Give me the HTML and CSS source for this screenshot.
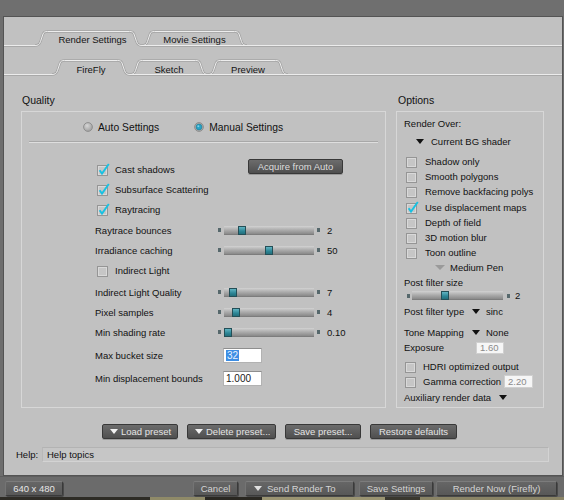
FILE: index.html
```html
<!DOCTYPE html>
<html>
<head>
<meta charset="utf-8">
<title>Render Settings</title>
<link rel="stylesheet" href="styles.css">
</head>
<body>
<div class="topband"></div>
<div class="panel">
  <div class="tabrow row1">
    <div class="tabfill lead1"></div>
    <div class="tab sel t107 first">
      <svg width="107" height="17" viewBox="0 0 107 17"><path class="tshadow" d="M0,15.5 C3,15.5 4.5,14.5 5.5,11.5 L8,4 C8.8,2 10,1.5 12.5,1.5 L94.5,1.5 C97,1.5 98.2,2 99,4 L101.5,11.5 C102.5,14.5 104,15.5 107,15.5"/><path class="tline" d="M0,15.5 C3,15.5 4.5,14.5 5.5,11.5 L8,4 C8.8,2 10,1.5 12.5,1.5 L94.5,1.5 C97,1.5 98.2,2 99,4 L101.5,11.5 C102.5,14.5 104,15.5 107,15.5"/></svg>
      <span>Render Settings</span>
    </div>
    <div class="tab t105">
      <svg width="105" height="17" viewBox="0 0 105 17"><path class="tshadow" d="M0,15.5 C3,15.5 4.5,14.5 5.5,11.5 L8,4 C8.8,2 10,1.5 12.5,1.5 L92.5,1.5 C95,1.5 96.2,2 97,4 L99.5,11.5 C100.5,14.5 102,15.5 105,15.5"/><path class="tline" d="M0,15.5 C3,15.5 4.5,14.5 5.5,11.5 L8,4 C8.8,2 10,1.5 12.5,1.5 L92.5,1.5 C95,1.5 96.2,2 97,4 L99.5,11.5 C100.5,14.5 102,15.5 105,15.5"/><path class="tline" d="M0,15.5H105"/><path class="tdark" d="M0,16.5H105"/></svg>
      <span>Movie Settings</span>
    </div>
    <div class="tabfill grow"></div>
  </div>

  <div class="tabrow row2">
    <div class="tabfill lead2"></div>
    <div class="tab sel t78">
      <svg width="78" height="17" viewBox="0 0 78 17"><path class="tshadow" d="M0,15.5 C3,15.5 4.5,14.5 5.5,11.5 L8,4 C8.8,2 10,1.5 12.5,1.5 L65.5,1.5 C68,1.5 69.2,2 70,4 L72.5,11.5 C73.5,14.5 75,15.5 78,15.5"/><path class="tline" d="M0,15.5 C3,15.5 4.5,14.5 5.5,11.5 L8,4 C8.8,2 10,1.5 12.5,1.5 L65.5,1.5 C68,1.5 69.2,2 70,4 L72.5,11.5 C73.5,14.5 75,15.5 78,15.5"/></svg>
      <span>FireFly</span>
    </div>
    <div class="tab t78">
      <svg width="78" height="17" viewBox="0 0 78 17"><path class="tshadow" d="M0,15.5 C3,15.5 4.5,14.5 5.5,11.5 L8,4 C8.8,2 10,1.5 12.5,1.5 L65.5,1.5 C68,1.5 69.2,2 70,4 L72.5,11.5 C73.5,14.5 75,15.5 78,15.5"/><path class="tline" d="M0,15.5 C3,15.5 4.5,14.5 5.5,11.5 L8,4 C8.8,2 10,1.5 12.5,1.5 L65.5,1.5 C68,1.5 69.2,2 70,4 L72.5,11.5 C73.5,14.5 75,15.5 78,15.5"/><path class="tline" d="M0,15.5H78"/><path class="tdark" d="M0,16.5H78"/></svg>
      <span>Sketch</span>
    </div>
    <div class="tab t80">
      <svg width="80" height="17" viewBox="0 0 80 17"><path class="tshadow" d="M0,15.5 C3,15.5 4.5,14.5 5.5,11.5 L8,4 C8.8,2 10,1.5 12.5,1.5 L67.5,1.5 C70,1.5 71.2,2 72,4 L74.5,11.5 C75.5,14.5 77,15.5 80,15.5"/><path class="tline" d="M0,15.5 C3,15.5 4.5,14.5 5.5,11.5 L8,4 C8.8,2 10,1.5 12.5,1.5 L67.5,1.5 C70,1.5 71.2,2 72,4 L74.5,11.5 C75.5,14.5 77,15.5 80,15.5"/><path class="tline" d="M0,15.5H80"/><path class="tdark" d="M0,16.5H80"/></svg>
      <span>Preview</span>
    </div>
    <div class="tabfill grow"></div>
  </div>

  <div class="sections">
    <section class="quality">
      <div class="sechead">Quality</div>
      <div class="box qbox">
        <div class="radiorow">
          <svg class="radio" width="10" height="10" viewBox="0 0 10 10"><defs><radialGradient id="rg" cx="40%" cy="35%" r="70%"><stop offset="0" stop-color="#d6d6d6"/><stop offset="1" stop-color="#9c9c9c"/></radialGradient></defs><circle cx="5" cy="5" r="4.4" fill="url(#rg)" stroke="#8a8a8a" stroke-width="0.9"/></svg>
          <span class="rlabel">Auto Settings</span>
          <svg class="radio r2" width="10" height="10" viewBox="0 0 10 10"><circle cx="5" cy="5" r="4.4" fill="#a9a9a9" stroke="#8a8a8a" stroke-width="0.9"/><circle cx="5" cy="5" r="2.9" fill="#27a3c6" stroke="#1c7c96" stroke-width="0.6"/><circle cx="4.3" cy="4.2" r="1" fill="#7fd3ea"/></svg>
          <span class="rlabel">Manual Settings</span>
        </div>
        <div class="sep"></div>
        <div class="checks">
          <div class="checkcol">
            <div class="crow"><svg class="cb" width="13" height="13" viewBox="0 0 13 13"><rect x="0.5" y="2.5" width="10" height="10" fill="#c6c6c6" stroke="#959595"/><rect x="1.5" y="3.5" width="8" height="8" fill="none" stroke="#d9d9d9"/><path d="M2.6 7.2 L5 10.6 L11.8 1" fill="none" stroke="#17c1e2" stroke-width="1.9"/></svg><span>Cast shadows</span></div>
            <div class="crow"><svg class="cb" width="13" height="13" viewBox="0 0 13 13"><rect x="0.5" y="2.5" width="10" height="10" fill="#c6c6c6" stroke="#959595"/><rect x="1.5" y="3.5" width="8" height="8" fill="none" stroke="#d9d9d9"/><path d="M2.6 7.2 L5 10.6 L11.8 1" fill="none" stroke="#17c1e2" stroke-width="1.9"/></svg><span>Subsurface Scattering</span></div>
            <div class="crow"><svg class="cb" width="13" height="13" viewBox="0 0 13 13"><rect x="0.5" y="2.5" width="10" height="10" fill="#c6c6c6" stroke="#959595"/><rect x="1.5" y="3.5" width="8" height="8" fill="none" stroke="#d9d9d9"/><path d="M2.6 7.2 L5 10.6 L11.8 1" fill="none" stroke="#17c1e2" stroke-width="1.9"/></svg><span>Raytracing</span></div>
          </div>
          <div class="btn acq">Acquire from Auto</div>
        </div>
        <div class="srow first-s">
          <span class="lbl">Raytrace bounces</span>
          <span class="sq"></span><span class="track"><span class="thumb" style="left:14px"></span></span><span class="sq sq2"></span><span class="val">2</span>
        </div>
        <div class="srow">
          <span class="lbl">Irradiance caching</span>
          <span class="sq"></span><span class="track"><span class="thumb" style="left:41px"></span></span><span class="sq sq2"></span><span class="val">50</span>
        </div>
        <div class="srow indirect">
          <svg class="cb" width="13" height="13" viewBox="0 0 13 13"><rect x="0.5" y="2.5" width="10" height="10" fill="#c6c6c6" stroke="#959595"/><rect x="1.5" y="3.5" width="8" height="8" fill="none" stroke="#d9d9d9"/></svg><span class="cbl">Indirect Light</span>
        </div>
        <div class="srow gap2">
          <span class="lbl">Indirect Light Quality</span>
          <span class="sq"></span><span class="track"><span class="thumb" style="left:5px"></span></span><span class="sq sq2"></span><span class="val">7</span>
        </div>
        <div class="srow">
          <span class="lbl">Pixel samples</span>
          <span class="sq"></span><span class="track"><span class="thumb" style="left:8px"></span></span><span class="sq sq2"></span><span class="val">4</span>
        </div>
        <div class="srow">
          <span class="lbl">Min shading rate</span>
          <span class="sq"></span><span class="track"><span class="thumb" style="left:0px"></span></span><span class="sq sq2"></span><span class="val">0.10</span>
        </div>
        <div class="irow ir1">
          <span class="ilbl">Max bucket size</span>
          <span class="inp"><span class="selected">32</span></span>
        </div>
        <div class="irow ir2">
          <span class="ilbl">Min displacement bounds</span>
          <span class="inp">1.000</span>
        </div>
      </div>
    </section>

    <section class="options">
      <div class="sechead">Options</div>
      <div class="box obox">
        <div class="orow renderover">Render Over:</div>
        <div class="orow bgrow"><span class="tri"></span><span>Current BG shader</span></div>
        <div class="ochecks">
          <div class="ocrow"><svg class="cb" width="13" height="13" viewBox="0 0 13 13"><rect x="0.5" y="2.5" width="10" height="10" fill="#c6c6c6" stroke="#959595"/><rect x="1.5" y="3.5" width="8" height="8" fill="none" stroke="#d9d9d9"/></svg><span>Shadow only</span></div>
          <div class="ocrow"><svg class="cb" width="13" height="13" viewBox="0 0 13 13"><rect x="0.5" y="2.5" width="10" height="10" fill="#c6c6c6" stroke="#959595"/><rect x="1.5" y="3.5" width="8" height="8" fill="none" stroke="#d9d9d9"/></svg><span>Smooth polygons</span></div>
          <div class="ocrow"><svg class="cb" width="13" height="13" viewBox="0 0 13 13"><rect x="0.5" y="2.5" width="10" height="10" fill="#c6c6c6" stroke="#959595"/><rect x="1.5" y="3.5" width="8" height="8" fill="none" stroke="#d9d9d9"/></svg><span>Remove backfacing polys</span></div>
          <div class="ocrow"><svg class="cb" width="13" height="13" viewBox="0 0 13 13"><rect x="0.5" y="2.5" width="10" height="10" fill="#c6c6c6" stroke="#959595"/><rect x="1.5" y="3.5" width="8" height="8" fill="none" stroke="#d9d9d9"/><path d="M2.6 7.2 L5 10.6 L11.8 1" fill="none" stroke="#17c1e2" stroke-width="1.9"/></svg><span>Use displacement maps</span></div>
          <div class="ocrow"><svg class="cb" width="13" height="13" viewBox="0 0 13 13"><rect x="0.5" y="2.5" width="10" height="10" fill="#c6c6c6" stroke="#959595"/><rect x="1.5" y="3.5" width="8" height="8" fill="none" stroke="#d9d9d9"/></svg><span>Depth of field</span></div>
          <div class="ocrow"><svg class="cb" width="13" height="13" viewBox="0 0 13 13"><rect x="0.5" y="2.5" width="10" height="10" fill="#c6c6c6" stroke="#959595"/><rect x="1.5" y="3.5" width="8" height="8" fill="none" stroke="#d9d9d9"/></svg><span>3D motion blur</span></div>
          <div class="ocrow"><svg class="cb" width="13" height="13" viewBox="0 0 13 13"><rect x="0.5" y="2.5" width="10" height="10" fill="#c6c6c6" stroke="#959595"/><rect x="1.5" y="3.5" width="8" height="8" fill="none" stroke="#d9d9d9"/></svg><span>Toon outline</span></div>
        </div>
        <div class="orow penrow"><span class="tri gray"></span><span>Medium Pen</span></div>
        <div class="orow pfsize">Post filter size</div>
        <div class="orow oslider"><span class="sq"></span><span class="track otrack"><span class="thumb" style="left:29px"></span></span><span class="sq osq2"></span><span class="oval">2</span></div>
        <div class="orow pftype"><span class="olbl">Post filter type</span><span class="tri"></span><span class="tval">sinc</span></div>
        <div class="orow tone"><span class="olbl">Tone Mapping</span><span class="tri"></span><span class="tval">None</span></div>
        <div class="orow expo"><span class="elbl">Exposure</span><span class="inp small">1.60</span></div>
        <div class="orow hdri"><svg class="cb" width="13" height="13" viewBox="0 0 13 13"><rect x="0.5" y="2.5" width="10" height="10" fill="#c6c6c6" stroke="#959595"/><rect x="1.5" y="3.5" width="8" height="8" fill="none" stroke="#d9d9d9"/></svg><span class="hlbl">HDRI optimized output</span></div>
        <div class="orow gamma"><svg class="cb" width="13" height="13" viewBox="0 0 13 13"><rect x="0.5" y="2.5" width="10" height="10" fill="#c6c6c6" stroke="#959595"/><rect x="1.5" y="3.5" width="8" height="8" fill="none" stroke="#d9d9d9"/></svg><span class="glbl">Gamma correction</span><span class="inp small gin">2.20</span></div>
        <div class="orow aux"><span>Auxiliary render data</span><span class="tri auxtri"></span></div>
      </div>
    </section>
  </div>

  <div class="presets">
    <div class="btn pbtn p1"><span class="wtri"></span>Load preset</div>
    <div class="btn pbtn p2"><span class="wtri"></span>Delete preset...</div>
    <div class="btn pbtn p3">Save preset...</div>
    <div class="btn pbtn p4">Restore defaults</div>
  </div>

  <div class="helprow">
    <span class="helplbl">Help:</span>
    <span class="helpfield">Help topics</span>
  </div>
</div>

<div class="bottombar">
  <div class="bbtn b640">640 x 480</div>
  <div class="bspacer"></div>
  <div class="bbtn bcancel">Cancel</div>
  <div class="bbtn bsend"><span class="wtri"></span>Send Render To</div>
  <div class="bbtn bsave">Save Settings</div>
  <div class="bbtn brender">Render Now (Firefly)</div>
</div>
<div class="strip"></div>
</body>
</html>
```

FILE: styles.css
```css
* { box-sizing: border-box; margin: 0; padding: 0; }
html, body { width: 564px; height: 500px; overflow: hidden; }
body {
  background: #6e6e6e;
  font-family: "Liberation Sans", Arial, sans-serif;
  font-size: 9.5px;
  color: #111111;
}

.topband { height: 16px; background: #6f6f6f; }

.panel {
  margin-left: 3px;
  width: 560px;
  height: 460px;
  background: #c1c1c1;
  border: 1px solid #545454;
  display: flex;
  flex-direction: column;
}

/* tabs */
.tabrow { display: flex; height: 17px; flex: none; }
.row1 { margin-top: 13px; }
.row2 { margin-top: 12px; }
.tabfill {
  height: 17px;
  background: linear-gradient(to bottom, transparent 15px, #ececec 15px, #ececec 16px, #a9a9a9 16px);
}
.lead1 { width: 31px; }
.lead2 { width: 48px; }
.grow { flex: 1; }
.tab {
  position: relative;
  flex: none;
  height: 17px;
  text-align: center;
  line-height: 12px;
  padding-top: 4px;
  color: #141414;
}
.row2 .tab { padding-top: 5px; }
.tab svg { position: absolute; left: 0; top: 0; overflow: visible; }
.tab span { position: relative; }
.tab.first { padding-left: 8px; }
.t107 { width: 107px; }
.t105 { width: 105px; }
.t78 { width: 78px; }
.t80 { width: 80px; }
.tline { fill: none; stroke: #ededed; stroke-width: 1; }
.tshadow { fill: none; stroke: #a4a4a4; stroke-width: 2.4; }
.tdark { fill: none; stroke: #a9a9a9; stroke-width: 1; }

/* sections */
.sections {
  display: grid;
  grid-template-columns: 365px 148px;
  column-gap: 10px;
  margin-left: 17px;
  padding-top: 18px;
}
.sechead { height: 17px; line-height: 13px; font-size: 10.5px; padding-left: 1px; }
.options .sechead { padding-left: 2px; }
.box { height: 297px; border: 1px solid #d7d7d7; }

/* quality box */
.radiorow {
  display: flex;
  align-items: center;
  height: 20px;
  margin-top: 5px;
  padding-left: 61px;
  font-size: 10.3px;
}
.radio { flex: none; }
.rlabel { margin-left: 5px; }
.r2 { margin-left: 35px; }
.sep {
  margin: 4px 7px 0 7px;
  height: 2px;
  border-top: 1px solid #a8a8a8;
  border-bottom: 1px solid #dedede;
}
.checks { display: flex; margin-top: 16px; padding-left: 75px; height: 60px; }
.checkcol { width: 151px; display: flex; flex-direction: column; }
.crow { display: flex; align-items: center; height: 20px; gap: 5px; }
.cb { flex: none; overflow: visible; }

.btn {
  height: 15px;
  border: 1px solid #383838;
  border-radius: 2px;
  background: linear-gradient(#6c6c6c, #4f4f4f);
  color: #dedede;
  line-height: 13px;
  text-align: center;
  box-shadow: 0 1px 0 #9a9a9a;
}
.acq { width: 95px; }

.srow {
  display: flex;
  align-items: center;
  height: 20px;
  padding-left: 73px;
}
.first-s { margin-top: 1px; }
.gap2 { margin-top: 2px; }
.indirect { padding-left: 75px; }
.indirect .cbl { margin-left: 5px; }
.lbl { width: 123px; flex: none; }
.sq {
  width: 3px;
  height: 4px;
  background: #56686c;
  flex: none;
}
.sq2 { margin-left: 3px; }
.track {
  position: relative;
  width: 90px;
  height: 9px;
  margin-left: 3px;
  background: linear-gradient(#d2d2d2, #ababab 45%, #8c8c8c 85%, #747474);
  flex: none;
}
.thumb {
  position: absolute;
  top: 0;
  width: 8px;
  height: 9px;
  background: linear-gradient(#62b4c2, #2c8595 60%, #236f7c);
  border: 1px solid #244f57;
}
.val { margin-left: 7px; }

.irow { display: flex; align-items: center; height: 18px; padding-left: 73px; }
.ir1 { margin-top: 4px; }
.ir2 { margin-top: 5px; }
.ilbl { width: 128px; flex: none; }
.inp {
  width: 39px;
  height: 15px;
  background: #ffffff;
  border: 1px solid #b2b2b2;
  border-top-color: #8e8e8e;
  line-height: 13px;
  padding-left: 2px;
  font-size: 10px;
  color: #1a1a1a;
}
.selected { background: #3d8ee4; color: #e8f2ff; padding: 0 1px; }

/* options box */
.obox { padding-left: 7px; }
.orow { display: flex; align-items: center; }
.renderover { height: 14px; margin-top: 4px; }
.bgrow { height: 16px; margin-top: 3px; padding-left: 12px; }
.bgrow .tri { margin-right: 7px; }
.tri {
  width: 0;
  height: 0;
  border-left: 4.5px solid transparent;
  border-right: 4.5px solid transparent;
  border-top: 5px solid #111;
  flex: none;
}
.tri.gray { border-top-color: #9a9a9a; border-left-width: 5px; border-right-width: 5px; }
.ochecks { margin-top: 4.5px; padding-left: 2px; }
.ocrow { display: flex; align-items: center; height: 15.3px; gap: 6px; }
.penrow { height: 13px; padding-left: 31px; }
.penrow .tri { margin-right: 5px; }
.pfsize { height: 14px; margin-top: 2.4px; }
.oslider { height: 12px; padding-left: 3px; }
.otrack { width: 91px; margin-left: 2px; }
.osq2 { margin-left: 4px; }
.oval { margin-left: 5px; }
.pftype { height: 16px; margin-top: 2px; }
.tone { height: 16px; margin-top: 5px; }
.olbl { width: 68px; flex: none; }
.tval { margin-left: 6px; }
.expo { height: 14px; }
.elbl { width: 72px; flex: none; }
.inp.small {
  width: 28px;
  height: 12px;
  line-height: 10px;
  font-size: 9.5px;
  color: #8a8a8a;
  background: #f6f6f6;
  border-color: #d0d0d0;
  padding-left: 3px;
}
.hdri { height: 16px; margin-top: 4px; padding-left: 1px; }
.hlbl { margin-left: 5px; }
.gamma { height: 14px; padding-left: 1px; }
.glbl { margin-left: 5px; width: 81px; flex: none; }
.inp.gin { width: 29px; height: 13px; line-height: 11px; }
.aux { height: 16px; margin-top: 1px; }
.auxtri { margin-left: 8px; }

/* preset buttons */
.presets {
  display: flex;
  gap: 9px;
  margin-top: 16px;
  padding-left: 98px;
  height: 15px;
  flex: none;
}
.pbtn { display: flex; align-items: center; justify-content: center; color: #e4e4e4; }
.p1, .p2 { justify-content: flex-start; padding-left: 7px; }
.p1 { width: 76px; }
.p2 { width: 89px; }
.p3 { width: 76px; }
.p4 { width: 87px; }
.wtri {
  width: 0;
  height: 0;
  border-left: 4px solid transparent;
  border-right: 4px solid transparent;
  border-top: 5px solid #f2f2f2;
  margin-right: 3px;
  flex: none;
}

/* help */
.helprow {
  display: flex;
  align-items: center;
  margin-top: 8px;
  height: 15px;
  padding-left: 12px;
  flex: none;
}
.helplbl { width: 26px; flex: none; }
.helpfield {
  width: 507px;
  height: 15px;
  background: #c6c6c6;
  border: 1px solid #d3d3d3;
  border-top-color: #b3b3b3;
  border-left-color: #b8b8b8;
  padding-left: 4px;
  line-height: 13px;
}

/* bottom bar */
.bottombar {
  display: flex;
  height: 21px;
  padding-top: 4px;
  background: #6b6b6b;
  border-top: 1px solid #5e5e5e;
}
.bbtn {
  height: 15px;
  border: 1px solid #3a3a3a;
  border-top-color: #7c7c7c;
  border-left-color: #747474;
  border-radius: 2px;
  background: linear-gradient(#666666, #585858);
  color: #d4d4d4;
  line-height: 13px;
  text-align: center;
  box-shadow: 1px 1px 0 #4a4a4a;
  flex: none;
}
.b640 { width: 58px; margin-left: 5px; color: #e6e6e6; }
.bspacer { flex: 1; }
.bcancel { width: 45px; }
.bsend { width: 109px; margin-left: 7px; display: flex; align-items: center; padding-left: 8px; }
.bsend .wtri { border-top-color: #e0e0e0; border-left-width: 4.5px; border-right-width: 4.5px; margin-right: 5px; }
.bsave { width: 74px; margin-left: 5px; }
.brender { width: 121px; margin-left: 3px; margin-right: 7px; }

.strip {
  height: 3px;
  background: linear-gradient(90deg, #2e2c26 0, #2e2c26 150px, #8f8a68 150px, #8f8a68 205px, #2a2822 205px, #2a2822 262px, #9a9472 262px, #9a9472 385px, #3a382f 385px, #3a382f 420px, #8a8466 420px, #8a8466 564px);
}
```
